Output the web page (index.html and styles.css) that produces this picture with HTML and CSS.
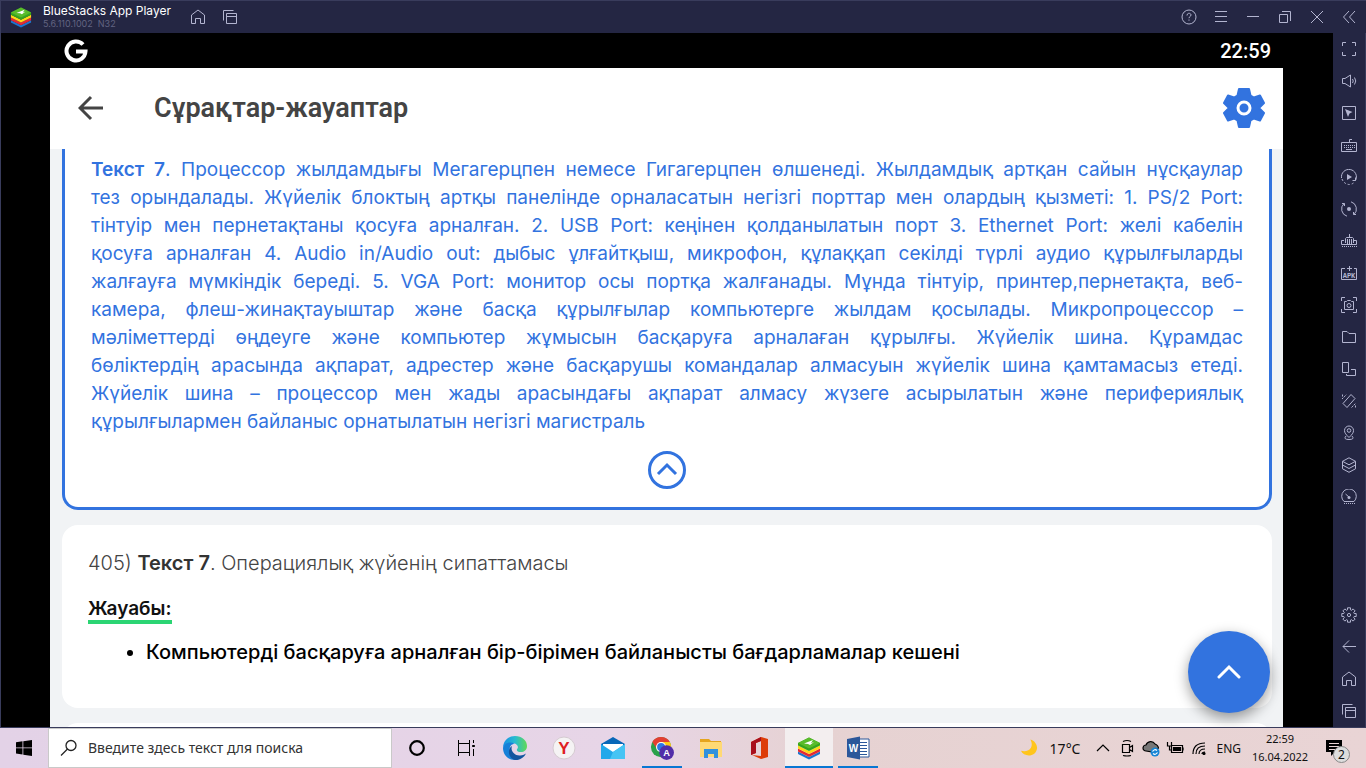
FILE: index.html
```html
<!DOCTYPE html>
<html lang="kk">
<head>
<meta charset="utf-8">
<meta name="viewport" content="width=device-width, initial-scale=1">
<title>BlueStacks App Player</title>
<link rel="stylesheet" href="styles.css">
</head>
<body>
<svg class="defs" aria-hidden="true">
  <symbol id="logo" viewBox="0 0 24 24">
    <path d="M1 15.500 12 21l11-5.500V18L12 23.500 1 18z" fill="#1b75cf"/>
    <path d="M1 12.500 12 18l11-5.500v3L12 21 1 15.500z" fill="#e32a35"/>
    <path d="M1 9.500 12 15l11-5.500v3L12 18 1 12.500z" fill="#ffd817"/>
    <path d="M1 7 12 1.500 23 7v2.500L12 15 1 9.500z" fill="#35a51e"/>
    <path d="M1 7 12 1.500 23 7 12 12.500z" fill="#59bc2b"/>
    <path d="M7 7.500 16 4l-2 3 3-1-4 3-2-1z" fill="#fff"/>
  </symbol>
  <symbol id="home" viewBox="0 0 16 16"><path d="M1.500 14.500V6L8 1l6.500 5v8.500h-4v-5h-5v5z"/></symbol>
  <symbol id="windows" viewBox="0 0 16 16"><path d="M1.500 11.500v-10h10M4.500 4.500h10v10h-10zM4.500 7.500h10"/></symbol>
</svg>

<div class="desktop">
  <header class="titlebar">
    <svg class="brand-logo" aria-hidden="true"><use href="#logo"/></svg>
    <div class="brand">
      <h1>BlueStacks App Player</h1>
      <p>5.6.110.1002&nbsp; N32</p>
    </div>
    <button class="tool" aria-label="Home"><svg><use href="#home"/></svg></button>
    <button class="tool" aria-label="Recent apps"><svg><use href="#windows"/></svg></button>
    <div class="window-controls">
      <button class="tool" aria-label="Help"><svg viewBox="0 0 16 16"><circle cx="8" cy="8" r="7"/><path d="M6 6.500C6 3.500 10 3.800 10 6c0 1.500-2 1.500-2 3.200M8 10.500v1.200"/></svg></button>
      <button class="tool" aria-label="Menu"><svg viewBox="0 0 16 16"><path d="M2 2.500h12M2 7.500h12M2 12.500h12"/></svg></button>
      <button class="tool" aria-label="Minimize"><svg viewBox="0 0 16 16"><path d="M2 7.500h12"/></svg></button>
      <button class="tool" aria-label="Restore"><svg viewBox="0 0 16 16"><path d="M2.500 5.500h8v8h-8zM5 2.500h8.500V12"/></svg></button>
      <button class="tool" aria-label="Close"><svg viewBox="0 0 16 16"><path d="m2 2 12 12M14 2 2 14"/></svg></button>
      <button class="tool" aria-label="Collapse"><svg viewBox="0 0 16 16"><path d="M8 2 2.500 8 8 14M14 2 8.500 8l5.500 6"/></svg></button>
    </div>
  </header>

  <div class="player">
    <main class="screen">
      <div class="statusbar">
        <svg viewBox="0 0 24 24" aria-label="Google"><path d="M19 5.500A9.500 9.500 0 1 0 21.500 12.500h-9.500" /></svg>
        <time>22:59</time>
      </div>
      <div class="app">
        <header class="app-header">
          <button class="back" aria-label="Артқа"><svg viewBox="0 0 26 26"><path d="M25 13H2M13 2 2 13l11 11"/></svg></button>
          <h2>Сұрақтар-жауаптар</h2>
          <button class="gear" aria-label="Баптаулар"><svg viewBox="0 0 42 42"><path d="M16 2h10l1.500 6.500 3.500 2 6-2 4 7.500-5 5 5 5-4 7.500-6-2-3.500 2L26 40H16l-1.500-6.500-3.500-2-6 2L1 26l5-5-5-5 4-7.500 6 2 3.500-2z"/><circle cx="21" cy="21" r="6"/></svg></button>
        </header>
        <div class="content">
          <article class="card passage">
            <p>
              <span><b>Текст 7</b>. Процессор жылдамдығы Мегагерцпен немесе Гигагерцпен өлшенеді. Жылдамдық артқан сайын нұсқаулар</span>
              <span>тез орындалады. Жүйелік блоктың артқы панелінде орналасатын негізгі порттар мен олардың қызметі: 1. PS/2 Port:</span>
              <span>тінтуір мен пернетақтаны қосуға арналған. 2. USB Port: кеңінен қолданылатын порт 3. Ethernet Port: желі кабелін</span>
              <span>қосуға арналған 4. Audio in/Audio out: дыбыс ұлғайтқыш, микрофон, құлаққап секілді түрлі аудио құрылғыларды</span>
              <span>жалғауға мүмкіндік береді. 5. VGA Port: монитор осы портқа жалғанады. Мұнда тінтуір, принтер,пернетақта, веб-</span>
              <span>камера, флеш-жинақтауыштар және басқа құрылғылар компьютерге жылдам қосылады. Микропроцессор –</span>
              <span>мәліметтерді өңдеуге және компьютер жұмысын басқаруға арналаған құрылғы. Жүйелік шина. Құрамдас</span>
              <span>бөліктердің арасында ақпарат, адрестер және басқарушы командалар алмасуын жүйелік шина қамтамасыз етеді.</span>
              <span>Жүйелік шина – процессор мен жады арасындағы ақпарат алмасу жүзеге асырылатын және перифериялық</span>
              <span>құрылғылармен байланыс орнатылатын негізгі магистраль</span>
            </p>
            <button class="collapse" aria-label="Жию"><svg viewBox="0 0 24 24"><path d="m3 16 9-9 9 9"/></svg></button>
          </article>
          <article class="card answer">
            <p class="question">405) <b>Текст 7</b>. Операциялық жүйенің сипаттамасы</p>
            <h3>Жауабы:</h3>
            <ul><li>Компьютерді басқаруға арналған бір-бірімен байланысты бағдарламалар кешені</li></ul>
          </article>
          <article class="card"></article>
          <button class="fab" aria-label="Жоғары"><svg viewBox="0 0 24 24"><path d="m2 17 10-10 10 10"/></svg></button>
        </div>
      </div>
    </main>

    <nav class="sidebar" aria-label="Tools">
      <button class="tool" aria-label="Full screen"><svg viewBox="0 0 16 16"><path d="M1.500 5V1.500H5M11 1.500h3.500V5M14.500 11v3.500H11M5 14.500H1.500V11"/></svg></button>
      <button class="tool" aria-label="Volume"><svg viewBox="0 0 16 16"><path d="M1.500 5.500H4L9.500 2v12L4 10.500H1.500zM11.500 6q1.500 2 0 4M13.500 4.500q2.500 3.500 0 7"/></svg></button>
      <button class="tool" aria-label="Pointer"><svg viewBox="0 0 16 16"><path d="M1.500 1.500h13v13h-13z"/><path class="solid" d="m4 4 7.500 3-3 1.500L7 12z"/></svg></button>
      <button class="tool" aria-label="Keyboard"><svg viewBox="0 0 16 16"><path d="M.5 5.500h15v9H.5zM8.500 5V2.500H11M5 12.500h6"/><path stroke-dasharray="1 1" d="M3 8.500h11M3 10.500h11"/></svg></button>
      <button class="tool" aria-label="Macro"><svg viewBox="0 0 16 16"><path d="M.5 9A7.500 7.500 0 1 1 14.500 11.500M11.500 11.500h3v-3"/><path stroke-dasharray="2 2" d="M1 10q2 5 7 5.500 3 0 5-2"/><path class="solid" d="m6 5 5 3-5 3z"/></svg></button>
      <button class="tool" aria-label="Sync"><svg viewBox="0 0 16 16"><path d="M6 15.200A7.500 7.500 0 0 1 3 2.500M10 .8a7.500 7.500 0 0 1 3 12.700M1 2.500h2.500V5M15 13.500h-2.500V11"/><circle class="solid" cx="8" cy="8" r="2"/></svg></button>
      <button class="tool" aria-label="Memory"><svg viewBox="0 0 16 16"><path d="M3 7.500H.5v4h15v-4H13M8.500 1v3M4.500 10V5.500l1-1h6l1 1V10M6.500 6v5M8.500 6v5M10.500 6v5"/><path stroke-dasharray="1 1" d="M1 13.500h15"/></svg></button>
      <button class="tool" aria-label="Install APK"><svg viewBox="0 0 16 16"><path d="M4 3.500H.5v11h15v-11H13M8.500 1v5M6 3.500h5"/><text x="8" y="13" text-anchor="middle">APK</text></svg></button>
      <button class="tool" aria-label="Screenshot"><svg viewBox="0 0 16 16"><path d="M.5 4V.5H4M12 .5h3.500V4M15.500 12v3.500H12M4 15.500H.5V12M3.500 4.500h2l1-1h3l1 1h2v8h-9z"/><circle cx="8" cy="8.500" r="2"/></svg></button>
      <button class="tool" aria-label="Folder"><svg viewBox="0 0 16 16"><path d="M1.500 2.500H6l2 2h6.500v9h-13z"/></svg></button>
      <button class="tool" aria-label="Multi window"><svg viewBox="0 0 16 16"><path d="M1.500 1.500h6v10h-6zM10 8.500h4.500v6h-9v-1.500"/></svg></button>
      <button class="tool" aria-label="Rotate"><svg viewBox="0 0 16 16"><path d="m10 1.500 4 4L6 14.500l-4-4z"/><path stroke-dasharray="2 1" d="M1 6l4.500-4.500M1.500 1.500v3M10.500 14.500 15 10M14.500 14.500v-3"/></svg></button>
      <button class="tool" aria-label="Location"><svg viewBox="0 0 16 16"><path d="M8 12.500C5 9.500 3.500 8 3.500 5.500a4.500 4.500 0 0 1 9 0C12.500 8 11 9.500 8 12.500zM5 11q-3 3.500 3 3.500t3-3.500"/><circle cx="8" cy="5.500" r="1.800"/></svg></button>
      <button class="tool" aria-label="Layers"><svg viewBox="0 0 16 16"><path d="m8 .8 6.500 3.500L8 7.800 1.500 4.300zM1.500 4.300v7.500L8 15.300l6.500-3.500V4.300M1.500 8 8 11.500 14.500 8"/></svg></button>
      <button class="tool" aria-label="Performance"><svg viewBox="0 0 16 16"><path d="M3 12.500A7.300 7.300 0 1 1 13 12.500zM4.500 5 8 8"/><circle class="solid" cx="8" cy="8.500" r="1.500"/><path stroke-dasharray="1 1" d="M3 14.500h11"/></svg></button>
      <span class="spacer"></span>
      <button class="tool" aria-label="Settings"><svg viewBox="0 0 16 16"><path d="M6.500 .8h3v2l1 .5 1.600-1.400 2 2-1.400 1.600.5 1h2v3h-2l-.5 1 1.400 1.600-2 2-1.600-1.400-1 .5v2h-3v-2l-1-.5-1.600 1.400-2-2 1.400-1.600-.5-1h-2v-3h2l.5-1-1.400-1.600 2-2 1.600 1.400 1-.5z"/><circle cx="8" cy="8" r="1.600"/></svg></button>
      <button class="tool" aria-label="Back"><svg viewBox="0 0 16 16"><path d="M15 7.500H2M8 1.500l-6 6 6 6"/></svg></button>
      <button class="tool" aria-label="Home screen"><svg><use href="#home"/></svg></button>
      <button class="tool" aria-label="Recents"><svg><use href="#windows"/></svg></button>
    </nav>
  </div>

  <footer class="taskbar">
    <button class="start" aria-label="Пуск"><svg viewBox="0 0 16 16"><path d="m0 2.300 6.500-1v6.200H0zM7.300 1.200 16 0v7.500H7.300zM0 8.300h6.500v6.200l-6.500-1zM7.300 8.300H16V16l-8.700-1.200z"/></svg></button>
    <label class="search">
      <svg viewBox="0 0 18 18"><circle cx="11" cy="6.500" r="5"/><path d="M7.500 10 1 16.500"/></svg>
      <input type="text" placeholder="Введите здесь текст для поиска" aria-label="Поиск">
    </label>
    <div class="apps">
      <button aria-label="Cortana"><svg viewBox="0 0 24 24"><circle cx="12" cy="12" r="6.800" fill="none" stroke="#000" stroke-width="2.200"/></svg></button>
      <button aria-label="Просмотр задач"><svg viewBox="0 0 24 24" fill="none" stroke="#000"><path d="M4.500 4v3.500h11V4M4.500 20v-3.500h11V20M4.500 7.500h11v9h-11zM19.500 4v3M19.500 13v7"/><path fill="#000" d="M18.500 9.500h2v1h-2z"/></svg></button>
      <button aria-label="Edge"><svg viewBox="0 0 24 24"><defs><linearGradient id="eg"><stop stop-color="#188fe5"/><stop offset=".5" stop-color="#28bbd0"/><stop offset="1" stop-color="#62d957"/></linearGradient></defs><path d="M0 12C0 5 5 0 12 0s12 4.500 12 10c0 4-3 6-6 6-4 0-5-2-3.500-3.500C16 10 13 7 9 7 4 7 1 9 0 12z" fill="url(#eg)"/><path d="M0 12C1 7 7 5 12 8c-4-.5-6 3-5 7 1 4 5 7 9 8.200C7 26 0 20 0 12z" fill="#1680d8"/><path d="M9 10c-2 5 3 10 8 9.500 3 0 5-1.500 6-2-2 4-6 7-11 6.500-7-2-8-11-3-14z" fill="#12559f"/></svg></button>
      <button aria-label="Yandex"><svg viewBox="0 0 24 24"><circle cx="12" cy="12" r="11" fill="#f5f3f4" stroke="#d5cbd1"/><text x="12" y="18" text-anchor="middle" font-size="17" fill="#df2022">Y</text></svg></button>
      <button aria-label="Почта"><svg viewBox="0 0 24 24"><path d="m0 8 12-7 12 7v15H0z" fill="#0867b8"/><path d="M2 8h20v8H2z" fill="#fff"/><path d="m0 8 12 8 12-8v15H0z" fill="#21a8ea"/><path d="m12 16 12-8v15H9z" fill="#45c4f4"/></svg></button>
      <button class="running" aria-label="Chrome"><svg viewBox="0 0 26 26"><circle cx="12" cy="12" r="11" fill="#29a14a"/><path d="M2.500 6.500A11 11 0 0 1 21.500 6.500H12L8 15z" fill="#e33e32"/><path d="M21.500 6.500A11 11 0 0 1 12 23l4-8-4-8.500z" fill="#fdc916"/><circle cx="12" cy="12" r="5.500" fill="#fff"/><circle cx="12" cy="12" r="4.300" fill="#2d75e4"/><circle cx="18" cy="18" r="8" fill="#512da8"/><text x="18" y="21.500" text-anchor="middle" font-size="10" fill="#fff">A</text></svg></button>
      <button aria-label="Проводник"><svg viewBox="0 0 24 24"><path d="M1 3h9l2 2h10v16H1z" fill="#e5a51e"/><path d="M1 6h22v15H1z" fill="#ffd974"/><path d="M5 13h14v9h-4v-4H9v4H5z" fill="#3291dc"/></svg></button>
      <button aria-label="Office"><svg viewBox="0 0 24 24"><path d="m3 6 10-5 7 2v18l-7 2-9-4 9 1V5L8 7v10l-5 2z" fill="#dd3c08"/><path d="M13 1 3 6v13l5-2V7l5-2z" fill="#a80f1d"/></svg></button>
      <button class="running current" aria-label="BlueStacks"><svg><use href="#logo"/></svg></button>
      <button class="running" aria-label="Word"><svg viewBox="0 0 24 24"><path d="M11 3h12v18H11z" fill="#fff" stroke="#2b579a"/><path d="M13 6.500h8M13 9.500h8M13 12.500h8M13 15.500h8M13 18.500h8" stroke="#2b579a"/><path d="M1 3 14 .5v23L1 21z" fill="#2b579a"/><text x="7.500" y="16" text-anchor="middle" font-size="10" fill="#fff">W</text></svg></button>
    </div>
    <div class="tray">
      <button class="weather"><svg viewBox="0 0 20 20"><path d="M11 1c4 8-1 14-10 12 3 7 16 7 17-3 0-4-3-8-7-9z" fill="#ffc51c"/></svg>17°C</button>
      <div class="tray-icons">
        <svg viewBox="0 0 18 18" aria-hidden="true"><path d="m3 12 6-6 6 6"/></svg>
        <svg viewBox="0 0 18 18" aria-hidden="true"><path d="M4.500 5.500h7v8h-7zM11.500 8.500l3-2v6l-3-2M5 2.500q4-2 8 0M5 16.500q4 1 8 0"/></svg>
        <svg viewBox="0 0 18 18" aria-hidden="true"><path fill="#777" d="M4 12a3 3 0 0 1 0-6 5 5 0 0 1 9-1q3 1 3.500 4L11 13z"/><circle cx="13" cy="13" r="4.500" fill="#1584d5" stroke="none"/><path stroke="#fff" d="M10.500 12.500q2-3 4.500-1M15.500 13.500q-2 3-4.500 1"/></svg>
        <svg viewBox="0 0 18 18" aria-hidden="true"><path d="M5.500 6.500h11v7h-11zM1.500 3v4h4V3M3.500 7v4h2"/><path fill="#000" d="M7.500 8.500h7v3h-7zM17 8.500v3"/></svg>
        <svg viewBox="0 0 18 18" aria-hidden="true"><path d="M3 15Q3 4 15 4M6 15q0-8 9-8M9 15q0-5 6-5M12 15q0-2 3-2"/><circle cx="14" cy="14.500" r="1" fill="#000"/></svg>
      </div>
      <span class="lang">ENG</span>
      <div class="clock"><time>22:59</time><time>16.04.2022</time></div>
      <button class="notes" aria-label="Уведомления"><svg viewBox="0 0 18 18"><path d="M1 1h16v12h-7l-4 4v-4H1z" fill="#000"/><path d="M4 4.500h10M4 7.500h10M4 10.500h7" stroke="#e9d3d4"/></svg><span>2</span></button>
    </div>
  </footer>
</div>
</body>
</html>
```
FILE: styles.css
```css
* { box-sizing: border-box; }
body { margin: 0; background: #000; font-family: Inter, "Noto Sans", sans-serif; }
h1, h2, h3, p, ul { margin: 0; }
button { border: 0; padding: 0; background: none; color: inherit; font: inherit; display: flex; align-items: center; justify-content: center; }
svg { display: block; flex: none; }
.defs { position: absolute; width: 0; height: 0; }
.desktop { height: 100vh; display: flex; flex-direction: column; overflow: hidden; }

/* player window */
.titlebar { flex: none; height: 33px; display: flex; align-items: center; background: #242643; border-top: 1px solid #393c5c; border-left: 1px solid #393c5c; }
.brand-logo { width: 24px; height: 22px; margin: 0 10px 0 8px; }
.brand { width: 139px; color: #fff; white-space: nowrap; }
.brand h1 { font: 400 12px/14px Inter, sans-serif; }
.brand p { font-size: 9px; line-height: 12px; color: #626481; }
.tool { width: 32px; height: 32px; flex: none; }
.tool svg { width: 16px; height: 16px; fill: none; stroke: #b3b5d0; stroke-width: 1; }
.tool .solid { fill: #b3b5d0; stroke: none; }
.tool text { font: 700 7px "Liberation Mono", monospace; fill: #b3b5d0; stroke: none; }
.window-controls { display: flex; margin-left: auto; padding-right: 1px; }
.player { flex: 1; min-height: 0; display: flex; }
.sidebar { width: 33px; flex: none; display: flex; flex-direction: column; background: #242643; border-right: 1px solid #393c5c; }
.spacer { flex: 1; }

/* emulated phone screen */
.screen { flex: 1; min-width: 0; display: flex; flex-direction: column; background: #000; border-left: 1px solid #393c5c; padding: 0 50px 0 49px; }
.statusbar { height: 35px; flex: none; display: flex; align-items: center; justify-content: space-between; padding: 0 12px 0 14px; color: #fff; font: 500 20px/24px Roboto, sans-serif; }
.statusbar svg { width: 24px; height: 24px; fill: none; stroke: #fff; stroke-width: 4; }
.app { flex: 1; min-height: 0; display: flex; flex-direction: column; background: #f1f3f5; }
.app-header { height: 81px; flex: none; display: flex; align-items: center; padding: 0 18px 2px 28px; background: #fff; color: #444; }
.back svg { width: 26px; height: 26px; fill: none; stroke: #444; stroke-width: 3; }
.app-header h2 { flex: 1; margin-left: 50px; font: 600 27px/32px Roboto, sans-serif; }
.gear svg { width: 42px; height: 42px; fill: #3273df; stroke: #3273df; stroke-width: 2; stroke-linejoin: round; }
.gear circle { stroke: #fff; stroke-width: 3; }
.content { position: relative; flex: 1; min-height: 0; overflow: hidden; display: flex; flex-direction: column; gap: 15px; padding: 0 11px 0 12px; }
.card { flex: none; min-height: 80px; background: #fff; border-radius: 16px; }
.passage { padding: 7px 26px 18px; border: 3px solid #3273df; border-top: 0; border-radius: 0 0 16px 16px; color: #3273df; font-size: 19px; line-height: 28px; }
.passage span { display: block; white-space: nowrap; text-align: justify; text-align-last: justify; }
.passage span:last-child { text-align-last: left; }
.passage b, .question b { font-weight: 600; }
.collapse { width: 38px; height: 38px; margin: 15px auto 0; border: 3px solid #3273df; border-radius: 50%; }
.collapse svg { width: 24px; height: 24px; fill: none; stroke: #3273df; stroke-width: 3; }
.answer { padding: 24px 26px 44px; font-size: 20px; line-height: 28px; color: #111; }
.question { color: #444; font-weight: 300; }
.question b { color: #333; }
.answer h3 { width: max-content; margin-top: 21px; border-bottom: 4px solid #2bd573; font-size: 19px; font-weight: 600; line-height: 22px; }
.answer ul { margin-top: 16px; padding-left: 58px; font-weight: 500; color: #000; line-height: 24px; }
.fab { position: absolute; right: 13px; bottom: 14px; width: 82px; height: 82px; border-radius: 50%; background: #3273df; box-shadow: 0 5px 14px #0006; }
.fab svg { width: 24px; height: 24px; fill: none; stroke: #fff; stroke-width: 3; stroke-linecap: round; }

/* system taskbar */
.taskbar { height: 41px; flex: none; display: flex; align-items: stretch; border-top: 1px solid #393c5c; background: linear-gradient(90deg, #e3d2e7, #e7d5e7 45%, #e6d2d2 60%, #e9d4d5); color: #111; font-family: "Noto Sans", sans-serif; }
.start { width: 48px; }
.start svg { width: 16px; height: 16px; }
.search { width: 344px; display: flex; align-items: center; gap: 10px; padding-left: 11px; background: #fff; border: 1px solid #c9c9c9; }
.search svg { width: 18px; height: 18px; fill: none; stroke: #222; stroke-width: 1.300; }
.search input { flex: 1; min-width: 0; border: 0; padding: 0; outline: 0; background: none; font: 14px/20px "Noto Sans", sans-serif; }
.search input::placeholder { color: #333; opacity: 1; }
.apps { display: flex; gap: 1px; margin-left: 1px; }
.apps button { width: 48px; }
.apps svg { width: 24px; height: 24px; }
.apps text { font-family: "Liberation Sans", sans-serif; font-weight: 700; }
.apps .running { background: linear-gradient(#0877d3, #0877d3) center bottom / 40px 2px no-repeat; }
.apps .current { background: linear-gradient(#0877d3, #0877d3) bottom / 100% 2px no-repeat #f3eeef; }
.tray { margin-left: auto; display: flex; align-items: center; }
.weather { gap: 11px; font-size: 14px; }
.weather svg { width: 19px; height: 20px; }
.tray-icons { display: flex; gap: 6px; margin-left: 14px; }
.tray-icons svg { width: 18px; height: 18px; fill: none; stroke: #000; stroke-width: 1.200; }
.lang { margin-left: 8px; font-size: 12px; }
.clock { display: flex; flex-direction: column; align-items: center; width: 78px; font-size: 11px; line-height: 18px; }
.notes { position: relative; width: 47px; height: 40px; padding-right: 18px; }
.notes svg { width: 18px; height: 18px; }
.notes span { position: absolute; left: 14px; top: 18px; width: 17px; height: 17px; border: 1px solid #888; border-radius: 50%; background: #ddd; font-size: 12px; line-height: 15px; }
```
